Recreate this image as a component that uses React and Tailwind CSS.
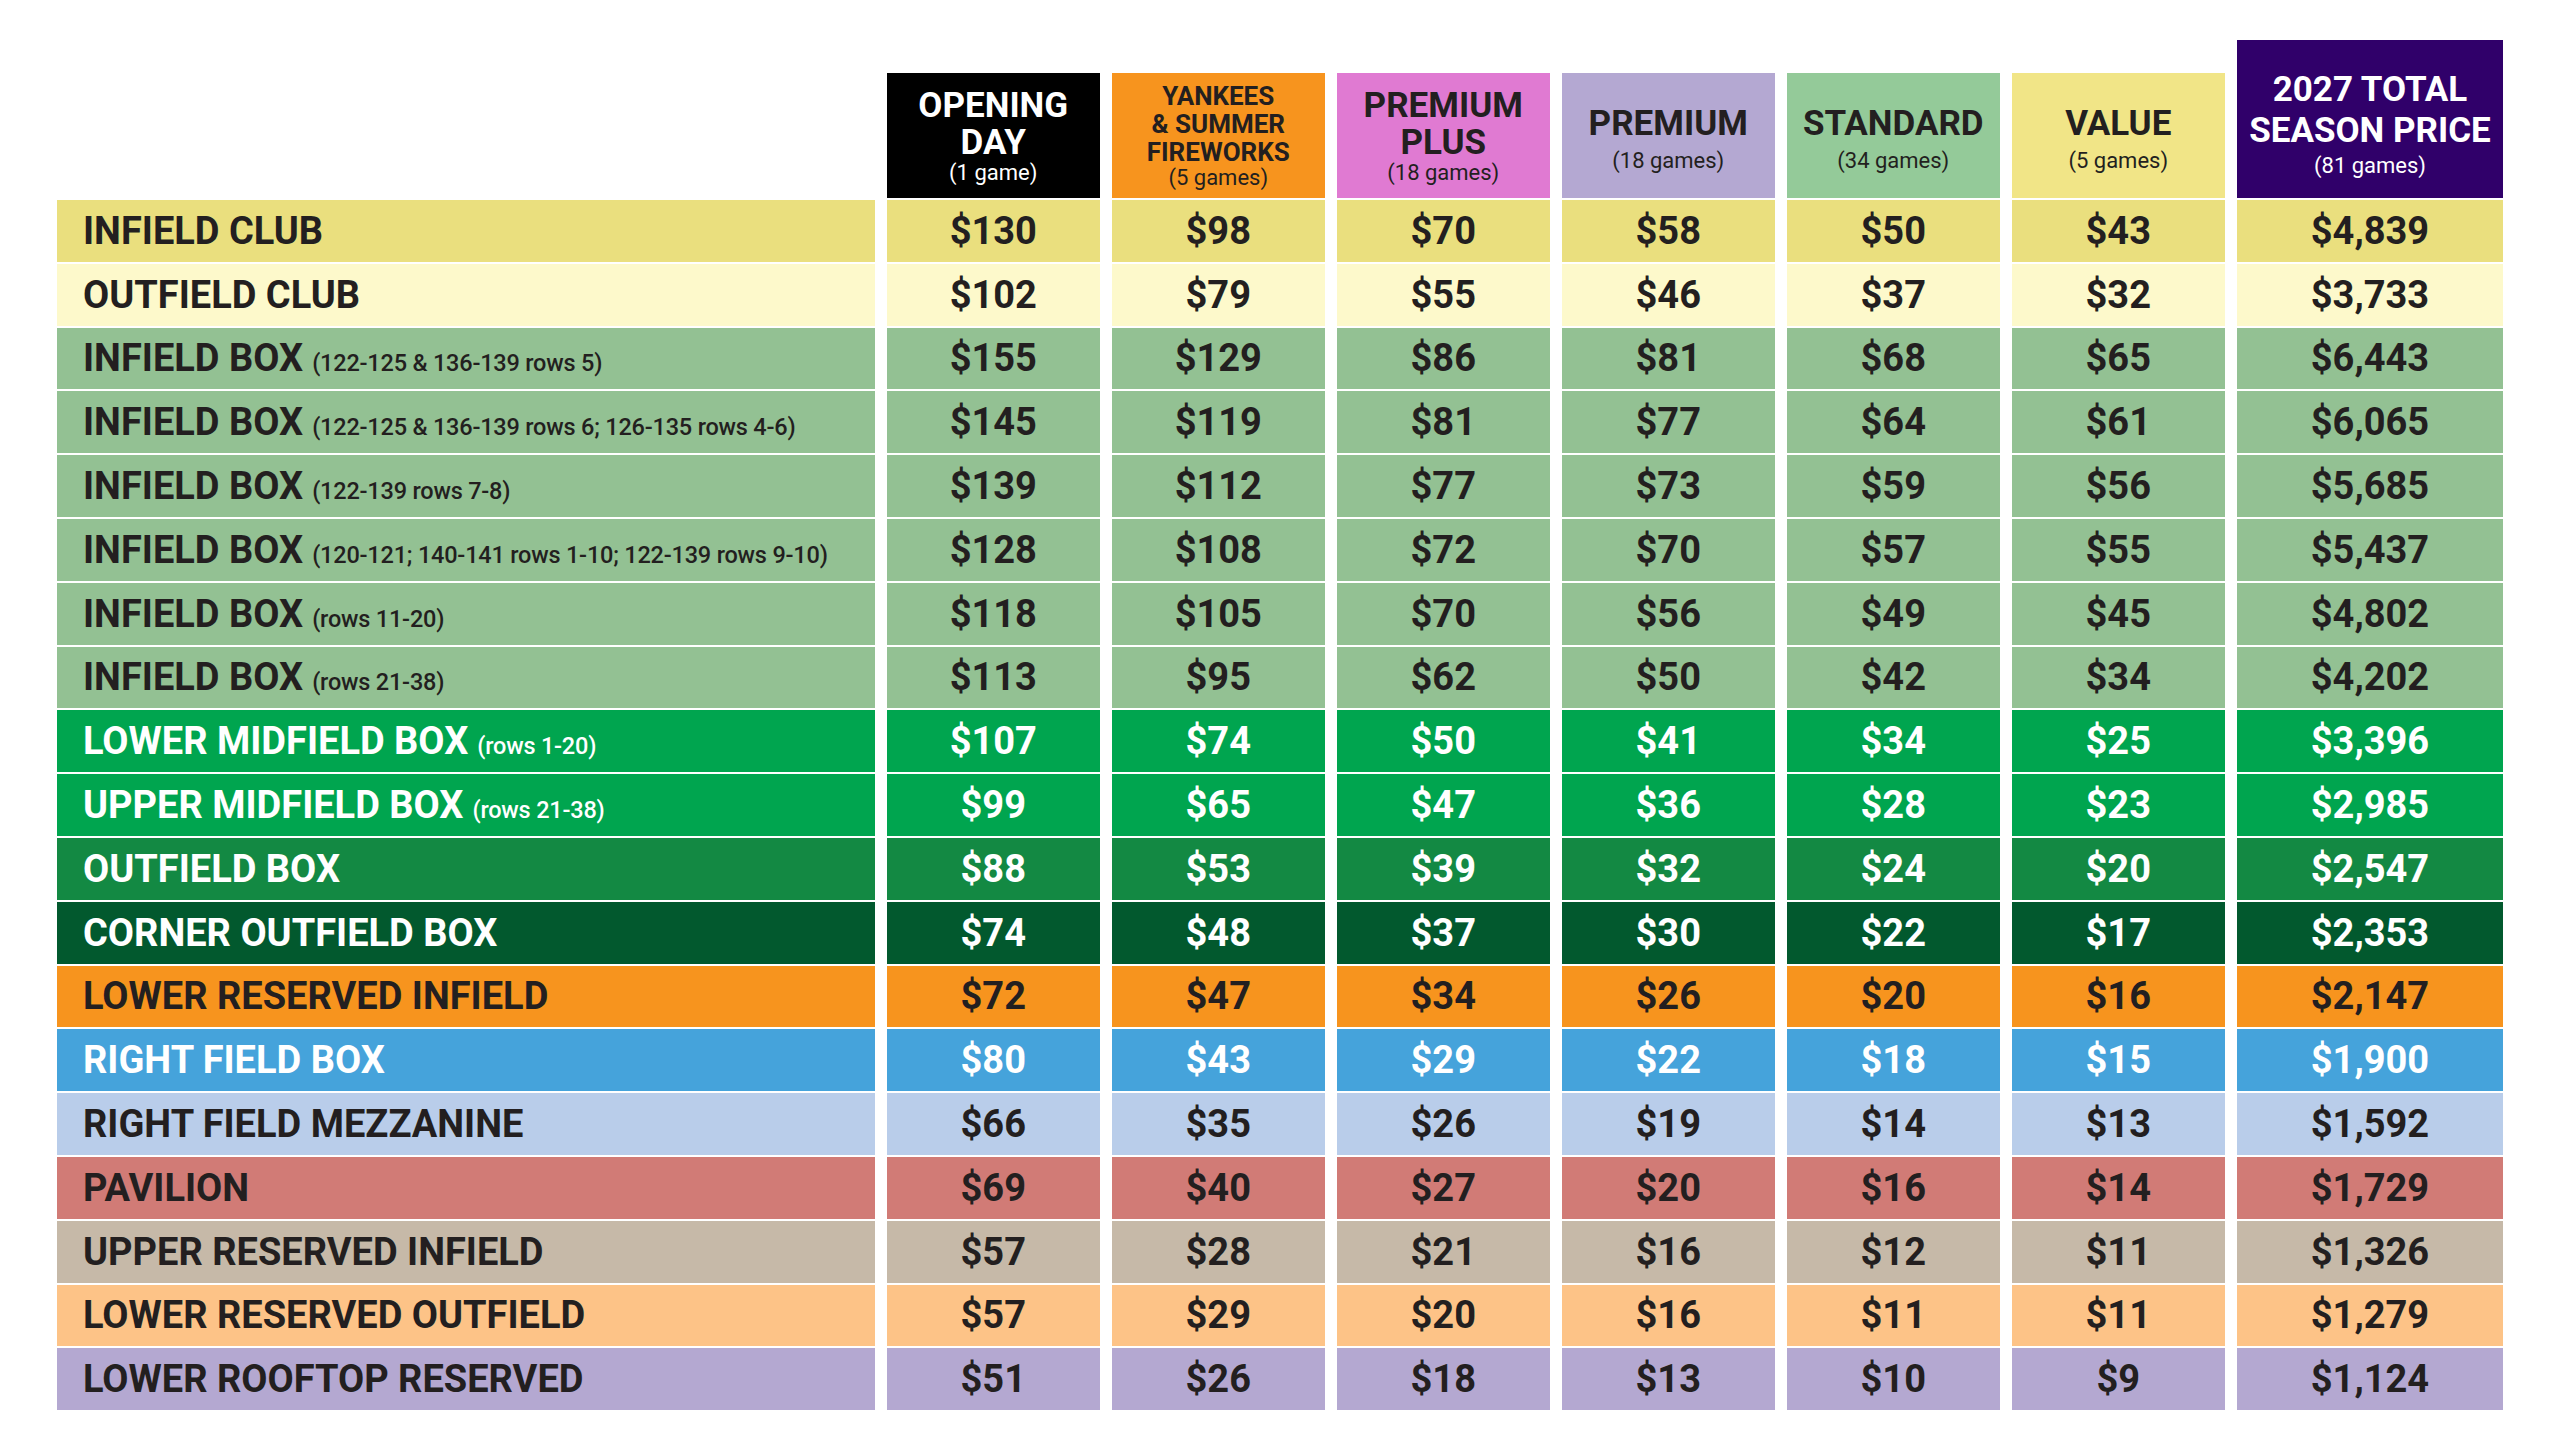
import React from "react";

const heads = [
  { title: ["OPENING", "DAY"], games: "(1 game)", bg: "bg-[#000000]", fg: "text-white", size: "text-[35px] leading-[37px]", gap: "", pad: "" },
  { title: ["YANKEES", "& SUMMER", "FIREWORKS"], games: "(5 games)", bg: "bg-[#f7941e]", fg: "text-[#231f20]", size: "text-[26px] leading-[28px]", gap: "", pad: "" },
  { title: ["PREMIUM", "PLUS"], games: "(18 games)", bg: "bg-[#e07ad2]", fg: "text-[#231f20]", size: "text-[35px] leading-[37px]", gap: "", pad: "" },
  { title: ["PREMIUM"], games: "(18 games)", bg: "bg-[#b4a8d2]", fg: "text-[#231f20]", size: "text-[35px] leading-[37px]", gap: "mt-[7px]", pad: "pt-[6px]" },
  { title: ["STANDARD"], games: "(34 games)", bg: "bg-[#94ca99]", fg: "text-[#231f20]", size: "text-[35px] leading-[37px]", gap: "mt-[7px]", pad: "pt-[6px]" },
  { title: ["VALUE"], games: "(5 games)", bg: "bg-[#f1e587]", fg: "text-[#231f20]", size: "text-[35px] leading-[37px]", gap: "mt-[7px]", pad: "pt-[6px]" },
];

const rows = [
  { name: "INFIELD CLUB", bg: "bg-[#eadf7e]", p: ["$130", "$98", "$70", "$58", "$50", "$43", "$4,839"] },
  { name: "OUTFIELD CLUB", bg: "bg-[#fdf9cb]", p: ["$102", "$79", "$55", "$46", "$37", "$32", "$3,733"] },
  { name: "INFIELD BOX", note: "(122-125 & 136-139 rows 5)", bg: "bg-[#93c193]", p: ["$155", "$129", "$86", "$81", "$68", "$65", "$6,443"] },
  { name: "INFIELD BOX", note: "(122-125 & 136-139 rows 6; 126-135 rows 4-6)", bg: "bg-[#93c193]", p: ["$145", "$119", "$81", "$77", "$64", "$61", "$6,065"] },
  { name: "INFIELD BOX", note: "(122-139 rows 7-8)", bg: "bg-[#93c193]", p: ["$139", "$112", "$77", "$73", "$59", "$56", "$5,685"] },
  { name: "INFIELD BOX", note: "(120-121; 140-141 rows 1-10; 122-139 rows 9-10)", bg: "bg-[#93c193]", p: ["$128", "$108", "$72", "$70", "$57", "$55", "$5,437"] },
  { name: "INFIELD BOX", note: "(rows 11-20)", bg: "bg-[#93c193]", p: ["$118", "$105", "$70", "$56", "$49", "$45", "$4,802"] },
  { name: "INFIELD BOX", note: "(rows 21-38)", bg: "bg-[#93c193]", p: ["$113", "$95", "$62", "$50", "$42", "$34", "$4,202"] },
  { name: "LOWER MIDFIELD BOX", note: "(rows 1-20)", bg: "bg-[#00a54f]", light: true, p: ["$107", "$74", "$50", "$41", "$34", "$25", "$3,396"] },
  { name: "UPPER MIDFIELD BOX", note: "(rows 21-38)", bg: "bg-[#00a54f]", light: true, p: ["$99", "$65", "$47", "$36", "$28", "$23", "$2,985"] },
  { name: "OUTFIELD BOX", bg: "bg-[#138943]", light: true, p: ["$88", "$53", "$39", "$32", "$24", "$20", "$2,547"] },
  { name: "CORNER OUTFIELD BOX", bg: "bg-[#02592e]", light: true, p: ["$74", "$48", "$37", "$30", "$22", "$17", "$2,353"] },
  { name: "LOWER RESERVED INFIELD", bg: "bg-[#f7941e]", p: ["$72", "$47", "$34", "$26", "$20", "$16", "$2,147"] },
  { name: "RIGHT FIELD BOX", bg: "bg-[#45a3db]", light: true, p: ["$80", "$43", "$29", "$22", "$18", "$15", "$1,900"] },
  { name: "RIGHT FIELD MEZZANINE", bg: "bg-[#b9cdea]", p: ["$66", "$35", "$26", "$19", "$14", "$13", "$1,592"] },
  { name: "PAVILION", bg: "bg-[#d17b76]", p: ["$69", "$40", "$27", "$20", "$16", "$14", "$1,729"] },
  { name: "UPPER RESERVED INFIELD", bg: "bg-[#c6b9a8]", p: ["$57", "$28", "$21", "$16", "$12", "$11", "$1,326"] },
  { name: "LOWER RESERVED OUTFIELD", bg: "bg-[#fdc387]", p: ["$57", "$29", "$20", "$16", "$11", "$11", "$1,279"] },
  { name: "LOWER ROOFTOP RESERVED", bg: "bg-[#b4a8d1]", p: ["$51", "$26", "$18", "$13", "$10", "$9", "$1,124"] },
];

const Header = ({ h }) => (
  <div className={`${h.bg} ${h.fg} ${h.pad} self-end h-[125px] flex flex-col items-center justify-center text-center`}>
    <div className={`${h.size} font-bold`}>
      {h.title.map((t) => (
        <div key={t}>{t}</div>
      ))}
    </div>
    <div className={`text-[22px] leading-[24px] font-normal ${h.gap}`}>{h.games}</div>
  </div>
);

const App = () => {
  return (
    <div className="w-[2568px] h-[1445px] bg-white pl-[57px] pt-[40px] font-['Roboto',sans-serif]">
      <div className="grid grid-cols-[817.5px_repeat(6,212.5px)_266px] grid-rows-[158px_repeat(19,61.8px)] gap-x-[12.5px] gap-y-[2px]">
        <div />
        {heads.map((h, i) => (
          <Header key={i} h={h} />
        ))}
        <div className="bg-[#30006a] text-white h-full flex flex-col items-center justify-center text-center pt-[10px]">
          <div className="text-[35px] leading-[41px] font-bold">
            <div>2027 TOTAL</div>
            <div>SEASON PRICE</div>
          </div>
          <div className="text-[22px] leading-[26px] font-normal mt-[2px]">(81 games)</div>
        </div>

        {rows.map((r, i) => {
          const fg = r.light ? "text-white" : "text-[#231f20]";
          return (
            <React.Fragment key={i}>
              <div className={`${r.bg} ${fg} flex items-center pl-[26px] whitespace-nowrap`}>
                <div className="flex items-baseline">
                  <span className="text-[38px] font-bold leading-none">{r.name}</span>
                  {r.note && <span className="text-[23.5px] font-medium leading-none ml-[9px] tracking-[-0.2px]">{r.note}</span>}
                </div>
              </div>
              {r.p.map((v, j) => (
                <div key={j} className={`${r.bg} ${fg} flex items-center justify-center text-[38px] font-bold leading-none`}>
                  {v}
                </div>
              ))}
            </React.Fragment>
          );
        })}
      </div>
    </div>
  );
};

export default App;
